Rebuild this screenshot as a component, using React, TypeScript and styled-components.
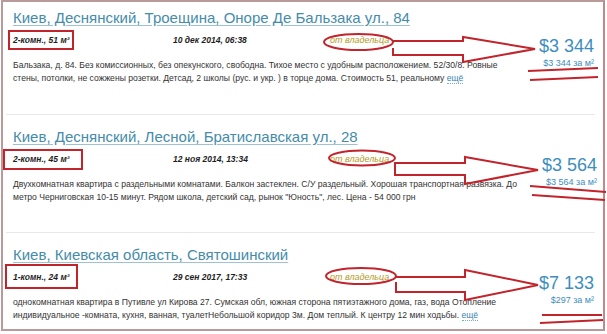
import styled, { createGlobalStyle } from "styled-components";

const GlobalStyle = createGlobalStyle`
  html, body {
    margin: 0;
    padding: 0;
    background: #fff;
  }
  body {
    font-family: "Liberation Sans", Arial, sans-serif;
  }
`;

const Frame = styled.div`
  box-sizing: border-box;
  width: 604px;
  height: 331px;
  margin-left: 1px;
  border: 2px solid #b99a9a;
  border-right-color: #c08a8c;
  display: flex;
  flex-direction: column;
`;

const Listing = styled.article<{ $pad: number; $h?: number }>`
  position: relative;
  box-sizing: border-box;
  ${(p) => (p.$h ? `height: ${p.$h}px; flex-shrink: 0;` : "flex: 1; min-height: 0;")}
  margin: 0 8px 0 3px;
  padding: ${(p) => p.$pad}px 1px 0 7px;
  border-bottom: 1px solid #e8e8e8;
  display: grid;
  grid-template-columns: 1fr 80px;
  align-items: start;
  &:last-child {
    border-bottom: none;
  }
`;

const Main = styled.div`
  display: flex;
  flex-direction: column;
`;

const Title = styled.a`
  font-size: 15px;
  line-height: 18px;
  color: #458caa;
  text-decoration: underline;
  text-decoration-color: #9dc2d2;
  text-underline-offset: 2px;
  white-space: nowrap;
  align-self: flex-start;
`;

const Meta = styled.div`
  margin-top: 6px;
  height: 14px;
  display: grid;
  grid-template-columns: 160px 157px auto;
  align-items: center;
  font-size: 8.5px;
  font-style: italic;
`;

const Spec = styled.span`
  font-weight: bold;
  color: #1e1e1e;
`;

const Posted = styled.span`
  font-weight: bold;
  color: #1e1e1e;
`;

const Owner = styled.span`
  font-size: 9px;
  color: #b39a1f;
`;

const Desc = styled.p`
  margin: 12px 0 0;
  font-size: 8.6px;
  line-height: 13px;
  color: #333;
  white-space: nowrap;
`;

const More = styled.a`
  color: #3a84b3;
  text-decoration: none;
  border-bottom: 1px dotted #7aaed0;
`;

const PriceBox = styled.div`
  margin-top: 27px;
  text-align: right;
  color: #3c8ec0;
`;

const Price = styled.div`
  font-size: 18px;
  line-height: 21px;
`;

const PerMeter = styled.div`
  font-size: 9px;
  line-height: 12px;
`;

const Marks = styled.svg`
  position: absolute;
  left: 0;
  top: 0;
  overflow: visible;
  pointer-events: none;
`;

const RED = "#c2242c";

type Mark = {
  box: [number, number, number, number];
  ring: [number, number, number, number];
  arrow: string;
  lines: [number, number, number, number][];
};

type Item = {
  title: string;
  spec: string;
  date: string;
  text: [string, string];
  more: boolean;
  price: string;
  perMeter: string;
  top: number;
  height?: number;
  pad: number;
  mark: Mark;
};

const items: Item[] = [
  {
    title: "Киев, Деснянский, Троещина, Оноре Де Бальзака ул., 84",
    spec: "2-комн., 51 м²",
    date: "10 дек 2014, 06:38",
    text: [
      "Бальзака, д. 84. Без комиссионных, без опекунского, свободна. Тихое место с удобным расположением. 52/30/8. Ровные",
      "стены, потолки, не сожжены розетки. Детсад, 2 школы (рус. и укр. ) в торце дома. Стоимость 51, реальному ",
    ],
    more: true,
    price: "$3 344",
    perMeter: "$3 344 за м²",
    top: 2,
    height: 113,
    pad: 7,
    mark: {
      box: [9, 31, 64, 18],
      ring: [358.5, 42, 34.5, 8],
      arrow: "392,41 463,41 463,37 535,49 463,62 463,55 393,55 393,48",
      lines: [
        [528, 71, 598, 68],
        [530, 80, 598, 77],
      ],
    },
  },
  {
    title: "Киев, Деснянский, Лесной, Братиславская ул., 28",
    spec: "2-комн., 45 м²",
    date: "12 ноя 2014, 13:34",
    text: [
      "Двухкомнатная квартира с раздельными комнатами. Балкон застеклен. С/У раздельный. Хорошая транспортная развязка. До",
      "метро Черниговская 10-15 минут. Рядом школа, детский сад, рынок \"Юность\", лес. Цена - 54 000 грн",
    ],
    more: false,
    price: "$3 564",
    perMeter: "$3 564 за м²",
    top: 115,
    height: 118,
    pad: 13,
    mark: {
      box: [4, 150, 78, 19],
      ring: [362, 158, 33, 7.5],
      arrow: "394,163 465,163 465,157 538,170 465,184 465,175 395,175 395,164",
      lines: [
        [530, 186, 606, 192],
        [532, 195, 605, 200],
      ],
    },
  },
  {
    title: "Киев, Киевская область, Святошинский",
    spec: "1-комн., 24 м²",
    date: "29 сен 2017, 17:33",
    text: [
      "однокомнатная квартира в Путивле ул Кирова 27. Сумская обл, южная сторона пятиэтажного дома, газ, вода Отопление",
      "индивидуальное -комната, кухня, ванная, туалетНебольшой коридор 3м. Дом теплый. К центру 12 мин ходьбы. ",
    ],
    more: true,
    price: "$7 133",
    perMeter: "$297 за м²",
    top: 233,
    pad: 13,
    mark: {
      box: [6, 265, 71, 23],
      ring: [361, 276, 35, 8],
      arrow: "395,277 465,277 465,270 538,285 465,300 465,292 396,292 396,282",
      lines: [
        [542, 315, 602, 315],
        [540, 323, 603, 320],
      ],
    },
  },
];

function Annotations({ mark, top }: { mark: Mark; top: number }) {
  const [bx, by, bw, bh] = mark.box;
  const [cx, cy, rx, ry] = mark.ring;
  return (
    <Marks width={589} height={100} viewBox={`6 ${top} 589 100`}>
      <rect x={bx} y={by} width={bw} height={bh} fill="none" stroke={RED} strokeWidth={2} />
      <ellipse cx={cx} cy={cy} rx={rx} ry={ry} fill="none" stroke={RED} strokeWidth={2} />
      <polyline points={mark.arrow} fill="none" stroke={RED} strokeWidth={2} />
      {mark.lines.map(([x1, y1, x2, y2], i) => (
        <line key={i} x1={x1} y1={y1} x2={x2} y2={y2} stroke={RED} strokeWidth={2} />
      ))}
    </Marks>
  );
}

export default function App() {
  return (
    <>
      <GlobalStyle />
      <Frame>
        {items.map((item) => (
          <Listing key={item.title} $pad={item.pad} $h={item.height}>
            <Main>
              <Title href="#">{item.title}</Title>
              <Meta>
                <Spec>{item.spec}</Spec>
                <Posted>{item.date}</Posted>
                <Owner>от владельца</Owner>
              </Meta>
              <Desc>
                {item.text[0]}
                <br />
                {item.text[1]}
                {item.more && <More href="#">ещё</More>}
              </Desc>
            </Main>
            <PriceBox>
              <Price>{item.price}</Price>
              <PerMeter>{item.perMeter}</PerMeter>
            </PriceBox>
            <Annotations mark={item.mark} top={item.top} />
          </Listing>
        ))}
      </Frame>
    </>
  );
}
